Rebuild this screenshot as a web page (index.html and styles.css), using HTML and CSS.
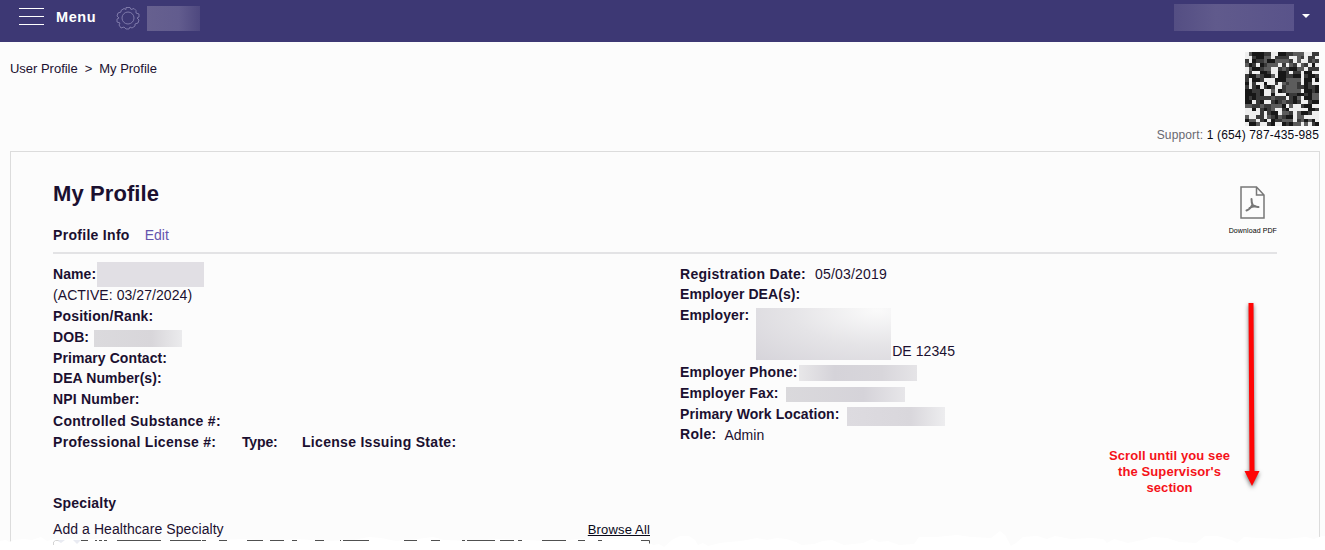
FILE: index.html
```html
<!DOCTYPE html>
<html lang="en">
<head>
<meta charset="utf-8">
<title>My Profile</title>
<link rel="stylesheet" href="styles.css">
</head>
<body>
<header class="topbar">
  <svg class="burger" width="25" height="18" viewBox="0 0 25 18"><path d="M0 .5h25M0 8.5h25M0 16.5h25" stroke="#fff"/></svg>
  <span class="menu">Menu</span>
  <svg class="gear" width="24" height="24" viewBox="0 0 24 24" fill="none" stroke="#8580af" stroke-width=".9"><circle cx="12" cy="12" r="6"/><path d="M10 1.500h4l1 2 3-1 2 2v2.500l3 1v3l-2 1 2 2-1 3-3 1v2l-3 2-2-1-1 2h-3l-2-2-3 1-2-3 1-2-3-1v-3l2-1-2-2 1-3 3-1V4.500l3-2 2 1z"/></svg>
  <span class="mask mask-nav"></span>
  <span class="mask mask-user"></span>
  <svg class="caret" width="8" height="4" viewBox="0 0 8 4"><path d="M0 0h8L4 4z" fill="#fff"/></svg>
</header>
<div class="subhead">
  <nav class="crumbs"><span>User Profile</span><span>&gt;</span><span>My Profile</span></nav>
  <div class="contact">
    <svg id="mosaic" class="mosaic" width="74" height="74" viewBox="0 0 20 20" shape-rendering="crispEdges"></svg>
    <div class="support">Support: <b>1 (654) 787-435-985</b></div>
  </div>
</div>
<main class="panel">
  <div class="panel-head">
    <div>
      <h1>My Profile</h1>
      <div class="subtitle"><strong>Profile Info</strong><a class="edit">Edit</a></div>
    </div>
    <div class="pdf">
      <svg width="25" height="33" viewBox="0 0 25 33" fill="none" stroke="#777" stroke-width="1.5"><path d="M1 1h15.500l7.500 8v23H1zM16.500 1v8H24"/><path d="M11.500 13c0 3 .3 4.500 1.200 6 2 1.600 4 2.200 5.800 2M12.300 18.500c-1 3-3.300 5-5.800 6M9.500 22c1.500-1 3.500-1.700 6-1.800" stroke-width="2" stroke-linecap="round"/></svg>
      <span>Download PDF</span>
    </div>
  </div>
  <div class="details">
    <div class="col">
      <div class="row"><strong class="tight">Name:</strong><span class="mask m-name"></span></div>
      <div class="row"><span class="active">(ACTIVE: 03/27/2024)</span></div>
      <div class="row"><strong class="snug">Position/Rank:</strong></div>
      <div class="row"><strong class="tight">DOB:</strong><span class="mask m-dob"></span></div>
      <div class="row short"><strong class="tight">Primary Contact:</strong></div>
      <div class="row"><strong class="tight">DEA Number(s):</strong></div>
      <div class="row"><strong class="snug">NPI Number:</strong></div>
      <div class="row tall"><strong>Controlled Substance #:</strong></div>
      <div class="row license"><strong>Professional License #:</strong><strong class="type">Type:</strong><strong>License Issuing State:</strong></div>
    </div>
    <div class="col">
      <div class="row dates"><strong>Registration Date:</strong><span class="value date">05/03/2019</span></div>
      <div class="row"><strong class="tight">Employer DEA(s):</strong></div>
      <div class="row employer"><strong class="tight">Employer:</strong><span class="mask m-employer"></span><span class="state">DE 12345</span></div>
      <div class="row"><strong class="snug">Employer Phone:</strong><span class="mask m-phone"></span></div>
      <div class="row"><strong class="snug">Employer Fax:</strong><span class="mask m-fax"></span></div>
      <div class="row"><strong class="tight">Primary Work Location:</strong><span class="mask m-work"></span></div>
      <div class="row role"><strong>Role:</strong><span class="value admin">Admin</span></div>
    </div>
  </div>
  <section class="specialty">
    <h2>Specialty</h2>
    <div class="add"><span class="active">Add a Healthcare Specialty</span><a>Browse All</a></div>
  </section>
</main>
<div class="note">Scroll until you see<br>the Supervisor's<br>section</div>
<svg class="arrow" width="34" height="205" viewBox="0 0 34 205"><path d="M14.500 8h5l1 168h5l-7.500 15-7.500-15h5z" fill="#ff0505"/></svg>
<svg class="torn" width="1325" height="20" viewBox="0 530 1325 20">
  <path fill="#fff" d="M0 541l6-1 3 2 5-2 10-1 8 1 9-3 6 4 7-2 8 1 7-1 15 1 20-2 18 3 25-2 22 1 21-3 28 3 25-1 30 2 24-2 30 2 27-1 15-3 12 1 15 3 13-1 24-3 11 3 25 1 31-2 24 1 24 1 20-1 25-2 18 1 28 1 15 5 5-1 5 3 8-7 8-4h9l6 4 3 5 5-2 5 3 12-3 9-1 12-1 16-3 10 2 10-2 9 1 10 3 6 3 12-1 9-3 9-1 12 5 19-2 9-4 7 3 9-1 11 4 15-1 5-7h18l20-2 14 2 20 1 9-7 5 4 6 11 5-3 7-6 14-1 10 3 8-3 16 3 20-1 12 1 4 4 7-4 14 4 14-3 11-3 14 1 12 4 17 1 9-7h12l15 4 5 3 7-6 14 1 28 1 20-2 8 2 8-3 15 1 6 5 4 3 8 1v5H0z"/>
  <path fill="#e9ebf2" d="M56 540h9l-4 3zM73 540h8l-4 4z"/>
  <path fill="none" stroke="#d4d4d4" d="M53.500 545v-3l2-1.500h3"/>
  <path fill="none" stroke="#505050" d="M81 540.500h7m7 0h2m2 0h3m2 0h3m10 0h44m9 0h31m1 0h4m13 0h8m20 0h16m7 0h14m8 0h5m18 0h9m16 0h1m2 0h26m35 0h13m14 0h9m22 0h3m2 0h28m5 0h14m4 0h4m20 0h24m12 0h7m13 0h4m39 0h8.500v3"/>
</svg>
<script src="mosaic.js"></script>
</body>
</html>
```
FILE: styles.css
```css
* { box-sizing: border-box; }
body { margin: 0; height: 550px; overflow: hidden; background: #fcfcfc; color: #1b1030; font: 14px/21px "Liberation Sans", Arial, sans-serif; }
.topbar { height: 42px; background: #3d3874; display: flex; align-items: flex-start; }
.burger { margin: 8px 0 0 19px; }
.menu { width: 61px; margin: 7px 0 0 12px; color: #fff; font-weight: bold; font-size: 14.5px; line-height: 21px; letter-spacing: .55px; }
.gear { margin-top: 6px; margin-left: -1px; }
.mask { display: block; flex: none; background: #d8d6dc; }
.mask-nav { width: 53px; height: 25px; margin: 6px 0 0 7px; background: linear-gradient(90deg, #66608f, #625c8e 60%, #4e487f); }
.mask-user { width: 120px; height: 27px; margin: 4px 0 0 auto; background: linear-gradient(90deg, #544e83, #605a8c 35%, #59538a); }
.caret { margin: 14px 15px 0 8px; }
.subhead { height: 109px; display: flex; justify-content: space-between; padding: 10px 6px 0 10px; }
.crumbs { display: flex; gap: 7px; padding-top: 6px; font-size: 13px; line-height: 21px; letter-spacing: -.02px; }
.contact { display: flex; flex-direction: column; align-items: flex-end; }
.support { font-size: 12px; line-height: 18px; color: #686870; letter-spacing: .15px; }
.support b { font-weight: normal; color: #080814; }
.panel { margin: 0 5px 0 10px; height: 420px; border: 1px solid #dcdcdc; padding: 0 42px; }
.panel-head { height: 102px; border-bottom: 2px solid #e3e3e5; display: flex; justify-content: space-between; }
h1 { margin: 27px 0 0; font-size: 22px; line-height: 30px; letter-spacing: .1px; }
.subtitle { display: flex; gap: 15px; margin-top: 16px; }
strong, h2 { font-weight: bold; letter-spacing: .3px; white-space: nowrap; }
.snug { letter-spacing: .17px; }
.tight { letter-spacing: .08px; }
.type { letter-spacing: -.15px; }
.edit { color: #6554ad; }
.pdf { display: flex; flex-direction: column; align-items: center; padding-top: 34px; font-size: 7px; line-height: 10px; color: #000; letter-spacing: .1px; }
.pdf svg { margin-right: 1px; }
.pdf span { margin-top: 7px; }
.details { display: grid; grid-template-columns: 627px 1fr; padding-top: 10px; height: 239px; }
.row { height: 21px; display: flex; align-items: center; white-space: nowrap; }
.row.short { height: 20px; }
.row.tall { height: 22px; }
.active { letter-spacing: .07px; }
.value { margin-left: 9px; }
.date { letter-spacing: .2px; }
.dates { height: 20px; padding-top: 1px; }
.role { height: 19px; }
.admin { padding-top: 1px; margin-left: 8px; }
.license { display: grid; grid-template-columns: 189px 60px auto; }
.employer { height: 57px; align-items: flex-start; }
.m-name { width: 107px; height: 25px; margin-left: 1px; background: #e1dfe4; }
.m-dob { width: 88px; height: 17px; margin: 2px 0 0 5px; background: linear-gradient(90deg, #dbdadd, #d8d6da 65%, #ebebed); }
.m-employer { width: 135px; height: 52px; margin: 3px 0 0 7px; background: radial-gradient(ellipse at 90% 5%, #fafafa, #e5e4e7 50%, #d6d4da); }
.state { margin: 36px 0 0 1px; letter-spacing: .07px; }
.m-phone { width: 118px; height: 16px; margin: 1px 0 0 1.5px; background: linear-gradient(90deg, #e8e7e9, #d5d3d9 30%, #d8d6db 70%, #e5e4e7); }
.m-fax { width: 119px; height: 15px; margin: 2px 0 0 7px; background: linear-gradient(90deg, #dad9dc, #d5d3d9 65%, #e7e6e9); }
.m-work { width: 98px; height: 19px; margin: 3px 0 0 8px; background: linear-gradient(90deg, #dddbe0, #d9d7dc 65%, #ededef); }
h2 { margin: 0; font-size: 14px; line-height: 21px; letter-spacing: .2px; }
.add { width: 597px; margin-top: 5px; display: flex; justify-content: space-between; }
.add a { color: #080818; font-size: 13px; letter-spacing: .15px; text-decoration: underline; }
.note { position: absolute; left: 1089px; top: 448px; width: 161px; color: #f51219; font-size: 13px; font-weight: bold; line-height: 16px; letter-spacing: .1px; text-align: center; }
.arrow { position: absolute; left: 1234px; top: 295px; filter: drop-shadow(0 2px 2px #0008); }
.torn { position: absolute; left: 0; top: 530px; }
```
FILE: mosaic.js
```javascript
// Grey mosaic: each digit is one cell's shade, dark to light.
const shades = ["#171717", "#3a3a3a", "#5c5c5c", "#eeeeee"];
const cells = [
  "32000113300112223311",
  "33100223111133213113",
  "13011200222213233121",
  "20130122231321321303",
  "32001223312100223111",
  "31330013300131130033",
  "10021002300110031001",
  "13001333000222230030",
  "03133033132122130133",
  "13103101331222110110",
  "00110332301222230010",
  "00010330333011001022",
  "01011112111310230022",
  "00310331012110133100",
  "22112112220323310033",
  "33031012331033333001",
  "33331310032213200133",
  "23311321021003223333",
  "02231030112223120203",
  "30023310330102232310"
];
document.getElementById("mosaic").innerHTML = cells.map((line, y) =>
  [...line].map((v, x) => `<rect x="${x}" y="${y}" width="1.03" height="1.03" fill="${shades[v]}"/>`).join("")
).join("");
```
